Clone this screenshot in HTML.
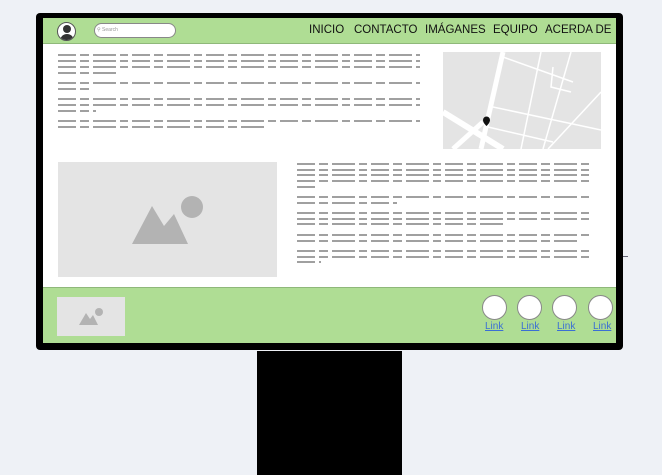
<!DOCTYPE html>
<html><head><meta charset="utf-8"><style>
*{margin:0;padding:0;box-sizing:border-box}
body{width:662px;height:475px;background:#eef1f6;position:relative;overflow:hidden;font-family:"Liberation Sans",sans-serif}
.abs{position:absolute}
.ln{position:absolute;height:2px;background:repeating-linear-gradient(90deg,#a0a0a0 0 18px,transparent 18px 22px,#a0a0a0 22px 31px,transparent 31px 35px,#a0a0a0 35px 58px,transparent 58px 62px,#a0a0a0 62px 70px,transparent 70px 74px)}
.nav{position:absolute;top:24px;font-size:11.5px;color:#111}
.c{position:absolute;top:295px;width:25px;height:25px;border-radius:50%;background:#fff;border:1px solid #888}
.lk{position:absolute;top:321px;font-size:10px;color:#3b6fd4;text-decoration:underline}
</style></head><body>
<div class="abs" style="left:36px;top:13px;width:587px;height:337px;background:#000;border-radius:4px"></div>
<div class="abs" style="left:257px;top:351px;width:145px;height:124px;background:#000"></div>
<div class="abs" style="left:43px;top:18px;width:573px;height:325px;background:#fff"></div>
<div class="abs" style="left:43px;top:18px;width:573px;height:26px;background:#afdd94;border-bottom:1px solid #8fb87a"></div>
<div class="abs" style="left:57px;top:22px;width:19px;height:19px;border-radius:50%;background:#fff;border:1px solid #555;overflow:hidden">
<div class="abs" style="left:5px;top:2px;width:8px;height:8px;border-radius:50%;background:#333"></div>
<div class="abs" style="left:2px;top:11px;width:14px;height:10px;border-radius:7px 7px 0 0;background:#333"></div></div>
<div class="abs" style="left:94px;top:23px;width:82px;height:15px;border-radius:8px;background:#fff;border:1px solid #888"></div>
<div class="abs" style="left:97px;top:27px;font-size:5px;color:#999">&#9906; Search</div>
<div class="nav" style="left:309px">INICIO</div>
<div class="nav" style="left:354px">CONTACTO</div>
<div class="nav" style="left:425px">IMÁGANES</div>
<div class="nav" style="left:493px">EQUIPO</div>
<div class="nav" style="left:545px">ACERDA DE</div>

<div class="ln" style="left:58px;top:54px;width:362px"></div>
<div class="ln" style="left:58px;top:60px;width:362px"></div>
<div class="ln" style="left:58px;top:66px;width:362px"></div>
<div class="ln" style="left:58px;top:72px;width:60px"></div>
<div class="ln" style="left:58px;top:82px;width:362px"></div>
<div class="ln" style="left:58px;top:88px;width:32px"></div>
<div class="ln" style="left:58px;top:98px;width:362px"></div>
<div class="ln" style="left:58px;top:104px;width:362px"></div>
<div class="ln" style="left:58px;top:110px;width:38px"></div>
<div class="ln" style="left:58px;top:120px;width:362px"></div>
<div class="ln" style="left:58px;top:126px;width:210px"></div>

<svg class="abs" style="left:443px;top:52px" width="158" height="97" viewBox="0 0 158 97">
<rect width="158" height="97" fill="#e4e4e4"/>
<g stroke="#fff" fill="none">
<path d="M60 0 L38 97" stroke-width="5"/>
<path d="M0 60 L60 97" stroke-width="6"/>
<path d="M10 97 L40 70" stroke-width="5"/>
<path d="M60 5 L130 30 M50 55 L158 78 M45 75 L110 90 M98 0 L78 97 M128 0 L100 97 M110 15 L108 35 L128 40 M105 97 L158 40" stroke-width="1.5"/>
</g>
<path d="M40 68 a3.5 3.5 0 1 1 7 0 c0 3 -3.5 6 -3.5 6 c0 0 -3.5 -3 -3.5 -6z" fill="#111"/>
</svg>

<div class="abs" style="left:58px;top:162px;width:219px;height:115px;background:#e4e4e4"></div>
<svg class="abs" style="left:130px;top:192px" width="75" height="52" viewBox="0 0 75 52">
<circle cx="62" cy="15" r="11" fill="#b3b3b3"/>
<path d="M2 52 L22 14 L34 34 L44 22 L58 52Z" fill="#b3b3b3"/>
</svg>

<div class="ln" style="left:297px;top:163px;width:292px"></div>
<div class="ln" style="left:297px;top:169px;width:292px"></div>
<div class="ln" style="left:297px;top:174px;width:292px"></div>
<div class="ln" style="left:297px;top:180px;width:292px"></div>
<div class="ln" style="left:297px;top:186px;width:20px"></div>
<div class="ln" style="left:297px;top:196px;width:292px"></div>
<div class="ln" style="left:297px;top:202px;width:100px"></div>
<div class="ln" style="left:297px;top:212px;width:292px"></div>
<div class="ln" style="left:297px;top:218px;width:292px"></div>
<div class="ln" style="left:297px;top:223px;width:210px"></div>
<div class="ln" style="left:297px;top:234px;width:292px"></div>
<div class="ln" style="left:297px;top:240px;width:280px"></div>
<div class="ln" style="left:297px;top:250px;width:292px"></div>
<div class="ln" style="left:297px;top:256px;width:292px"></div>
<div class="ln" style="left:297px;top:261px;width:24px"></div>

<div class="abs" style="left:43px;top:287px;width:573px;height:56px;background:#afdd94;border-top:1px solid #8fb87a"></div>
<div class="abs" style="left:57px;top:297px;width:68px;height:39px;background:#e4e4e4"></div>
<svg class="abs" style="left:79px;top:307px" width="25" height="18" viewBox="0 0 25 18">
<circle cx="20" cy="5" r="4" fill="#b3b3b3"/>
<path d="M0 18 L7 6 L11 12 L14 8 L19 18Z" fill="#b3b3b3"/>
</svg>
<div class="c" style="left:482px"></div>
<div class="c" style="left:517px"></div>
<div class="c" style="left:552px"></div>
<div class="c" style="left:588px"></div>
<div class="lk" style="left:485px">Link</div>
<div class="lk" style="left:521px">Link</div>
<div class="lk" style="left:557px">Link</div>
<div class="lk" style="left:593px">Link</div>
<div class="abs" style="left:623px;top:256px;width:5px;height:1px;background:#667"></div>
</body></html>
